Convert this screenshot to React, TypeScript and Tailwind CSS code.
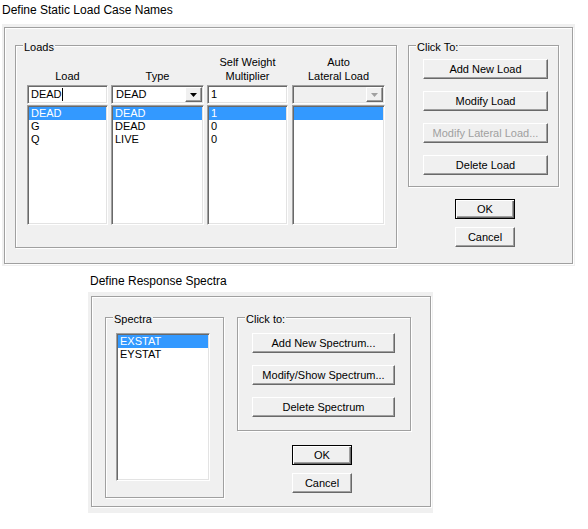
import React from 'react';

// classic win32 bevels
const RAISED =
  'border border-t-white border-l-white border-r-[#696969] border-b-[#696969] shadow-[inset_-1px_-1px_0_#a0a0a0]';
const DEFAULT_BTN =
  'border border-black shadow-[inset_1px_1px_0_#fff,inset_-1px_-1px_0_#696969,inset_-2px_-2px_0_#a0a0a0]';
const SUNKEN =
  'border border-t-[#a0a0a0] border-l-[#a0a0a0] border-r-white border-b-white shadow-[inset_1px_1px_0_#696969,inset_-1px_-1px_0_#e3e3e3]';
const ETCHED = 'border border-[#a0a0a0] shadow-[inset_1px_1px_0_#fff,1px_1px_0_#fff]';

function Button({
  label,
  className = '',
  disabled = false,
  isDefault = false,
}: {
  label: string;
  className?: string;
  disabled?: boolean;
  isDefault?: boolean;
}) {
  return (
    <div
      className={`flex h-[20px] shrink-0 items-center justify-center bg-[#f0f0f0] text-[11px] leading-none ${
        isDefault ? DEFAULT_BTN : RAISED
      } ${disabled ? 'text-[#a0a0a0]' : 'text-black'} ${className}`}
    >
      {label}
    </div>
  );
}

function Group({
  label,
  className = '',
  children,
}: {
  label: string;
  className?: string;
  children?: React.ReactNode;
}) {
  return (
    <div className={`relative shrink-0 ${ETCHED} ${className}`}>
      <span className="absolute left-[7px] top-[-6px] bg-[#f0f0f0] px-px text-[11px] leading-[14px] text-black">
        {label}
      </span>
      {children}
    </div>
  );
}

function Combo({ value = '', disabled = false }: { value?: string; disabled?: boolean }) {
  return (
    <div className={`mt-[2px] flex h-[19px] w-full shrink-0 p-[1px] ${SUNKEN} ${disabled ? 'bg-[#f0f0f0]' : 'bg-white'}`}>
      <div className="flex-1 pl-[3px] text-[11px] leading-[15px]">{value}</div>
      <div className={`flex w-[17px] items-center justify-center bg-[#f0f0f0] ${RAISED}`}>
        <svg width="7" height="4" viewBox="0 0 7 4">
          <polygon points="0,0 7,0 3.5,4" fill={disabled ? '#a0a0a0' : '#000'} />
        </svg>
      </div>
    </div>
  );
}

function List({ items, className = '' }: { items: string[]; className?: string }) {
  return (
    <div className={`shrink-0 bg-white p-[1px] ${SUNKEN} ${className}`}>
      {items.map((it, i) => (
        <div
          key={i}
          className={`h-[13px] pl-[2px] text-[11px] leading-[13px] ${
            i === 0 ? 'bg-[#3399ff] text-white' : 'text-black'
          }`}
        >
          {it}
        </div>
      ))}
    </div>
  );
}

function Header({ top = '', bottom }: { top?: string; bottom: string }) {
  return (
    <div className="flex h-[28px] shrink-0 flex-col justify-end text-center text-[11px] leading-[14px]">
      {top && <div>{top}</div>}
      <div>{bottom}</div>
    </div>
  );
}

export default function App() {
  return (
    <div className="flex h-[529px] w-[588px] flex-col bg-white font-['Liberation_Sans',Arial,sans-serif] text-black">
      <div className="h-[24px] pl-[2px] pt-[3px] text-[12px] leading-[14px]">Define Static Load Case Names</div>

      {/* static load cases */}
      <div className="ml-[2px] h-[242px] w-[573px] bg-[#f0f0f0] px-[2px] pb-[2px] pt-[3px]">
        <div className={`flex h-full pl-[10px] pt-[17px] ${ETCHED}`}>
          <Group label="Loads" className="flex h-[203px] w-[382px] items-start pl-[11px] pt-[9px]">
            <div className="flex w-[81px] flex-col">
              <Header bottom="Load" />
              <div className={`mt-[2px] flex h-[19px] shrink-0 items-center bg-white p-[1px] pl-[2px] text-[11px] ${SUNKEN}`}>
                <span className="pl-px leading-[15px]">DEAD</span>
                <span className="h-[13px] w-px bg-black" />
              </div>
              <List items={['DEAD', 'G', 'Q']} className="mt-[1px] h-[120px]" />
            </div>
            <div className="ml-[3px] flex w-[93px] flex-col">
              <Header bottom="Type" />
              <Combo value="DEAD" />
              <List items={['DEAD', 'DEAD', 'LIVE']} className="mt-[1px] h-[120px]" />
            </div>
            <div className="ml-[3px] flex w-[81px] flex-col">
              <Header top="Self Weight" bottom="Multiplier" />
              <div className={`mt-[2px] h-[19px] shrink-0 bg-white p-[1px] pl-[3px] text-[11px] leading-[15px] ${SUNKEN}`}>1</div>
              <List items={['1', '0', '0']} className="mt-[1px] h-[120px]" />
            </div>
            <div className="ml-[4px] flex w-[93px] flex-col">
              <Header top="Auto" bottom="Lateral Load" />
              <Combo disabled />
              <List items={['']} className="mt-[1px] h-[120px]" />
            </div>
          </Group>

          <div className="ml-[11px] flex w-[151px] flex-col">
            <Group label="Click To:" className="flex h-[142px] flex-col gap-[12px] pl-[14px] pt-[13px]">
              <Button label="Add New Load" className="w-[125px]" />
              <Button label="Modify Load" className="w-[125px]" />
              <Button label="Modify Lateral Load..." className="w-[125px]" disabled />
              <Button label="Delete Load" className="w-[125px]" />
            </Group>
            <Button label="OK" isDefault className="ml-[47px] mt-[12px] w-[60px]" />
            <Button label="Cancel" className="ml-[47px] mt-[8px] w-[60px]" />
          </div>
        </div>
      </div>

      <div className="mt-[8px] h-[18px] pl-[90px] text-[12px] leading-[14px]">Define Response Spectra</div>

      {/* response spectra */}
      <div className="ml-[88px] h-[221px] w-[345px] bg-[#f0f0f0] pb-[6px] pl-[3px] pr-[2px] pt-[4px]">
        <div className={`flex h-full pl-[13px] pt-[20px] ${ETCHED}`}>
          <Group label="Spectra" className="h-[181px] w-[119px] pl-[10px] pt-[15px]">
            <List items={['EXSTAT', 'EYSTAT']} className="h-[148px] w-[94px]" />
          </Group>
          <div className="ml-[13px] flex w-[174px] flex-col">
            <Group label="Click to:" className="flex h-[114px] flex-col gap-[12px] pl-[14px] pt-[15px]">
              <Button label="Add New Spectrum..." className="w-[143px]" />
              <Button label="Modify/Show Spectrum..." className="w-[143px]" />
              <Button label="Delete Spectrum" className="w-[143px]" />
            </Group>
            <Button label="OK" isDefault className="ml-[55px] mt-[14px] w-[60px]" />
            <Button label="Cancel" className="ml-[55px] mt-[8px] w-[60px]" />
          </div>
        </div>
      </div>
    </div>
  );
}
